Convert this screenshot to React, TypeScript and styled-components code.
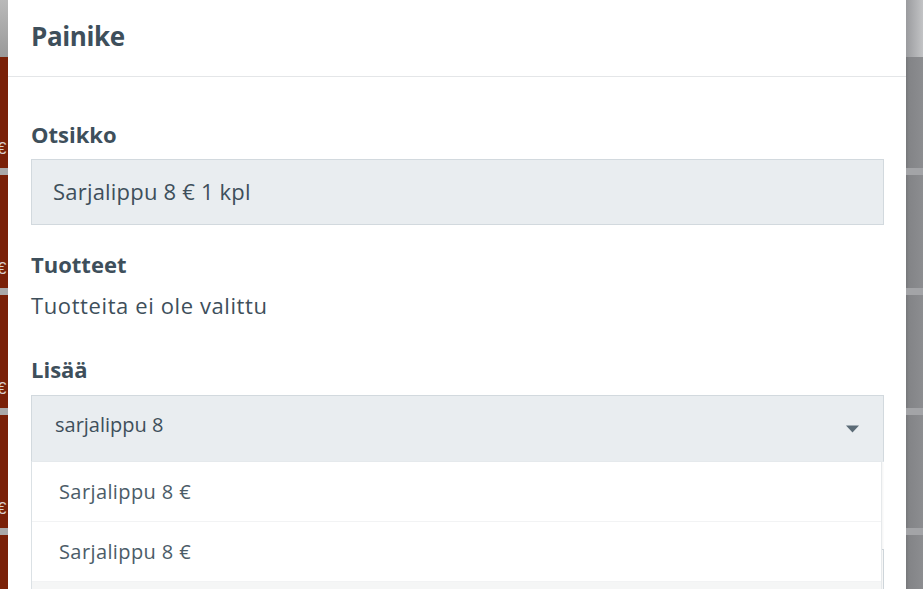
import React from "react";
import styled, { createGlobalStyle } from "styled-components";

const Global = createGlobalStyle`
  html, body { margin: 0; padding: 0; }
  body {
    width: 923px;
    height: 589px;
    overflow: hidden;
    font-family: "Open Sans", "Noto Sans", sans-serif;
    color: #3e4f5b;
  }
`;

const Screen = styled.div`
  display: flex;
  width: 923px;
  height: 589px;
  overflow: hidden;
`;

const LeftStrip = styled.div`
  width: 8px;
  flex: none;
  display: flex;
  flex-direction: column;
  overflow: hidden;
  background: #7a2108;
`;

const RightStrip = styled.div`
  width: 17px;
  flex: none;
  display: flex;
  flex-direction: column;
  overflow: hidden;
  background: linear-gradient(to right, #76777a 0px, #838487 3px, #8c8d90 100%);
`;

const Cap = styled.div<{ $side: "left" | "right" }>`
  height: 57px;
  flex: none;
  background: ${(p) =>
    p.$side === "left"
      ? "linear-gradient(to bottom, #b9b9b9, #9a9a9a)"
      : "linear-gradient(to right, #9a9b9e, #c2c3c5)"};
`;

const Cell = styled.div<{ $side: "left" | "right"; $first?: boolean }>`
  height: ${(p) => (p.$first ? 118 : 120)}px;
  flex: none;
  display: flex;
  flex-direction: column;
  justify-content: flex-end;
  border-bottom: 7px solid ${(p) => (p.$side === "left" ? "#a9a9a9" : "#a3a4a7")};
  box-sizing: border-box;
`;

const Euro = styled.span`
  display: block;
  font-family: "Liberation Sans", Arial, sans-serif;
  font-size: 17px;
  line-height: 18px;
  color: #d8d0cc;
  margin-left: -3px;
  margin-bottom: 10px;
  white-space: nowrap;
`;

const Modal = styled.div`
  flex: 1;
  background: #fff;
  display: flex;
  flex-direction: column;
  min-width: 0;
`;

const Header = styled.div`
  flex: none;
  height: 77px;
  box-sizing: border-box;
  border-bottom: 1px solid #e4e6e8;
  display: flex;
  align-items: center;
  padding: 0 23px 4px 23px;
`;

const Title = styled.h2`
  margin: 0;
  font-size: 26px;
  font-weight: 700;
  letter-spacing: -0.4px;
  color: #3e4f5b;
`;

const Body = styled.div`
  padding: 42px 22px 0 23px;
  display: flex;
  flex-direction: column;
`;

const Label = styled.div<{ $gapTop?: number }>`
  font-size: 22px;
  font-weight: 700;
  line-height: 30px;
  margin-top: ${(p) => p.$gapTop ?? 0}px;
  margin-bottom: 10px;
`;

const TextInput = styled.div`
  flex: none;
  height: 66px;
  box-sizing: border-box;
  background: #e9edf0;
  border: 1px solid #d2d9de;
  display: flex;
  align-items: center;
  padding: 0 21px 2px;
  font-size: 22px;
  letter-spacing: 0.2px;
  color: #3e4f5b;
`;

const Plain = styled.div`
  font-size: 22px;
  line-height: 30px;
  letter-spacing: 0.6px;
  margin-top: 1px;
`;

const SelectWrap = styled.div`
  position: relative;
  margin-top: 1px;
  flex: none;
`;

const SelectBox = styled.div`
  height: 67px;
  box-sizing: border-box;
  background: #e9edf0;
  border: 1px solid #d2d9de;
  border-bottom-color: #e9edf0;
  display: flex;
  align-items: center;
  justify-content: space-between;
  padding: 0 24px 0 23px;
  font-size: 20px;
`;

const SelectText = styled.span`
  padding-bottom: 8px;
`;

const Menu = styled.div`
  position: absolute;
  top: 100%;
  left: 0;
  right: 2px;
  background: #fff;
  border-left: 1px solid #dbe1e5;
  border-right: 1px solid #e6e9eb;
  box-shadow: 1px 0 2px rgba(0, 0, 0, 0.05);
  z-index: 2;
`;

const MenuItem = styled.div<{ $active?: boolean }>`
  height: 60px;
  box-sizing: border-box;
  border-bottom: 1px solid #f2f3f4;
  display: flex;
  align-items: center;
  padding: 0 27px 1px;
  font-size: 20px;
  letter-spacing: 0.4px;
  color: #4b5c68;
  background: ${(p) => (p.$active ? "#f5f6f6" : "#fff")};
`;

const Underlay = styled.div`
  flex: none;
  margin-top: 87px;
  height: 60px;
  border: 1px solid #d2d9de;
  background: #fff;
`;

function Strip({ side }: { side: "left" | "right" }) {
  const cells = [0, 1, 2, 3, 4];
  return (
    <>
      <Cap $side={side} />
      {cells.map((i) => (
        <Cell key={i} $side={side} $first={i === 0}>
          {side === "left" && <Euro>€</Euro>}
        </Cell>
      ))}
    </>
  );
}

function Caret() {
  return (
    <svg width="13" height="8" viewBox="0 0 13 8">
      <path d="M0 0.5 H13 L6.5 7.5 Z" fill="#5b6b76" />
    </svg>
  );
}

export default function App() {
  return (
    <>
      <Global />
      <Screen>
        <LeftStrip>
          <Strip side="left" />
        </LeftStrip>
        <Modal>
          <Header>
            <Title>Painike</Title>
          </Header>
          <Body>
            <Label>Otsikko</Label>
            <TextInput>Sarjalippu 8 € 1 kpl</TextInput>
            <Label $gapTop={24}>Tuotteet</Label>
            <Plain>Tuotteita ei ole valittu</Plain>
            <Label $gapTop={34}>Lisää</Label>
            <SelectWrap>
              <SelectBox>
                <SelectText>sarjalippu 8</SelectText>
                <Caret />
              </SelectBox>
              <Menu>
                <MenuItem>Sarjalippu 8 €</MenuItem>
                <MenuItem>Sarjalippu 8 €</MenuItem>
                <MenuItem $active>Sarjalippu 8 €</MenuItem>
              </Menu>
            </SelectWrap>
            <Underlay />
          </Body>
        </Modal>
        <RightStrip>
          <Strip side="right" />
        </RightStrip>
      </Screen>
    </>
  );
}
